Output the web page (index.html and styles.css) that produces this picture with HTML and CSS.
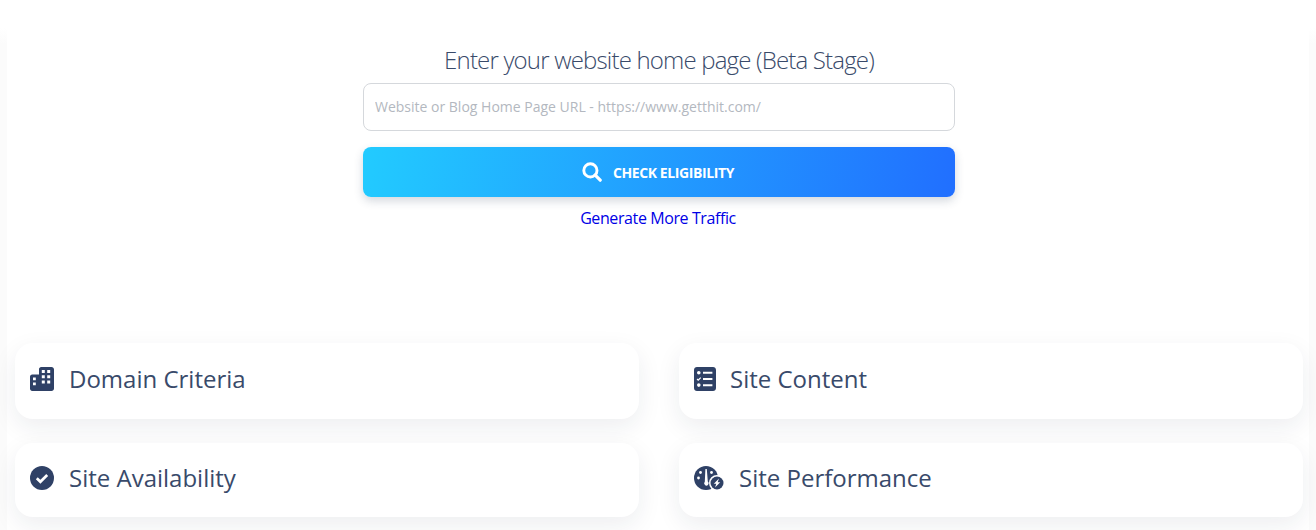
FILE: index.html
```html
<!DOCTYPE html>
<html lang="en">
<head>
  <meta charset="UTF-8" />
  <meta name="viewport" content="width=device-width, initial-scale=1.0"/>
  <title>Check Eligibility</title>
  <link rel="stylesheet" href="styles.css">
</head>
<body>

  <div class="panel">
    <div class="check">
      <h2 class="check-title">Enter your website home page (Beta Stage)</h2>
      <input class="url-input" type="text" placeholder="Website or Blog Home Page URL - https://www.getthit.com/"/>
      <button class="check-btn" type="button">
        <svg class="search-icon" viewBox="0 0 20 20">
          <circle cx="8.4" cy="8.4" r="6.6" fill="none" stroke="#fff" stroke-width="2.9"/>
          <path d="M13.2 13.2L18.2 18.2" stroke="#fff" stroke-width="3.2" stroke-linecap="round"/>
        </svg>
        <span>CHECK ELIGIBILITY</span>
      </button>
      <a class="more-link" href="#">Generate More Traffic</a>
    </div>

    <div class="cards">
      <div class="card">
        <svg class="icon" viewBox="0 0 24 24">
          <path fill-rule="evenodd" d="M9 2.200C9 1 10 0 11.200 0h10.300C22.900 0 24 1.100 24 2.500v19C24 22.900 22.900 24 21.500 24H2.200C1 24 0 23 0 21.800V9.700C0 8.500 1 7.500 2.200 7.500H9zM11.800 3v3h3V3zm5.400 0v3h3V3zM11.800 8.200v3h3v-3zm5.400 0v3h3v-3zM11.800 13.400v3h3v-3zm5.400 0v3h3v-3zM3 10.500v2.800h2.800v-2.800zm0 5v2.800h2.800v-2.800z"/>
        </svg>
        <span class="card-title">Domain Criteria</span>
      </div>
      <div class="card">
        <svg class="icon icon-narrow" viewBox="0 0 22 24">
          <path fill-rule="evenodd" d="M3 0h16c1.700 0 3 1.300 3 3v18c0 1.700-1.300 3-3 3H3c-1.700 0-3-1.300-3-3V3c0-1.700 1.300-3 3-3zm1.800 3.900a1.800 1.800 0 1 0 0 3.600a1.800 1.800 0 0 0 0-3.600zm4.200.9v2h9.400v-2zm0 6.200v2h9.400v-2zm0 6.200v2h9.400v-2zM4.800 16.300a1.800 1.800 0 1 0 0 3.600a1.800 1.800 0 0 0 0-3.600zM3.500 11.500l-.9.900l1.600 1.700l3-3l-.9-.9l-2.100 2.100z"/>
        </svg>
        <span class="card-title">Site Content</span>
      </div>
      <div class="card">
        <svg class="icon" viewBox="0 0 24 24">
          <circle cx="12" cy="12" r="12"/>
          <path d="M6.800 12.300l3.600 3.500l6.800-6.800" fill="none" stroke="#fff" stroke-width="2.700"/>
        </svg>
        <span class="card-title">Site Availability</span>
      </div>
      <div class="card">
        <svg class="icon icon-wide" viewBox="0 0 30 24">
          <circle cx="12" cy="12" r="12"/>
          <circle cx="23" cy="17" r="8" fill="#fff"/>
          <circle cx="23" cy="17" r="6.500"/>
          <path d="M25 12.500l-5.200 5.300h2.500l-1.300 3.700l5.200-5.300h-2.500z" fill="#fff"/>
          <path d="M11.400 3h1.400L13.800 15.600a2.200 2.200 0 1 1-3 .2z" fill="#fff"/>
          <circle cx="4.500" cy="12" r="1.400" fill="#fff"/>
          <circle cx="6.500" cy="6.500" r="1.400" fill="#fff"/>
          <circle cx="17.500" cy="6.500" r="1.400" fill="#fff"/>
        </svg>
        <span class="card-title">Site Performance</span>
      </div>
    </div>
  </div>

</body>
</html>
```

FILE: styles.css
```css
* { margin: 0; padding: 0; box-sizing: border-box; }
html, body {
  height: 530px;
  overflow: hidden;
}
body {
  font-family: "Open Sans", sans-serif;
  background: linear-gradient(#fff 28px, #fbfbfb 44px);
  color: #394a6a;
}
.panel {
  height: 530px;
  margin: 0 7px;
  padding-top: 43px;
  background: #fff;
}
.check {
  width: 592px;
  margin-left: 356px;
  display: flex;
  flex-direction: column;
  align-items: stretch;
}
.check-title {
  font-size: 24px;
  font-weight: 300;
  line-height: 34px;
  letter-spacing: -0.82px;
  text-align: center;
  color: #394a6a;
}
.url-input {
  height: 48px;
  margin-top: 6px;
  padding: 0 11px 2px;
  font-family: inherit;
  font-size: 14px;
  background: #fff;
  border: 1px solid #d5d8dc;
  border-radius: 8px;
  outline: none;
}
.url-input::placeholder {
  color: #b3b8c0;
  opacity: 1;
}
.check-btn {
  height: 50px;
  margin-top: 16px;
  padding-right: 2px;
  display: flex;
  align-items: center;
  justify-content: center;
  gap: 11px;
  font-family: inherit;
  font-size: 14px;
  font-weight: 700;
  letter-spacing: -0.4px;
  color: #fff;
  border: 0;
  border-radius: 8px;
  background: linear-gradient(100deg, #22cbff 0%, #216fff 100%);
  box-shadow: 0 4px 10px rgba(40, 60, 90, 0.2);
}
.search-icon {
  width: 20px;
  height: 20px;
}
.more-link {
  margin-top: 9px;
  padding-right: 2px;
  font-size: 16px;
  line-height: 24px;
  letter-spacing: -0.4px;
  text-align: center;
  color: #0000e6;
  text-decoration: none;
}
.cards {
  margin-top: 113px;
  padding: 0 8px;
  display: grid;
  grid-template-columns: 624px 624px;
  grid-template-rows: 76px 74px;
  column-gap: 40px;
  row-gap: 24px;
}
.card {
  padding: 0 15px 4px;
  display: flex;
  align-items: center;
  background: #fff;
  border-radius: 18px;
  box-shadow: 0 8px 24px rgba(30, 40, 60, 0.08);
}
.icon {
  width: 24px;
  height: 24px;
  flex-shrink: 0;
  fill: #2f4166;
}
.icon-wide {
  width: 30px;
}
.icon-narrow {
  width: 22px;
}
.card-title {
  margin-left: 15px;
  font-size: 24px;
  line-height: 32px;
  color: #394a6a;
}
.icon-narrow + .card-title {
  margin-left: 14px;
}
```
